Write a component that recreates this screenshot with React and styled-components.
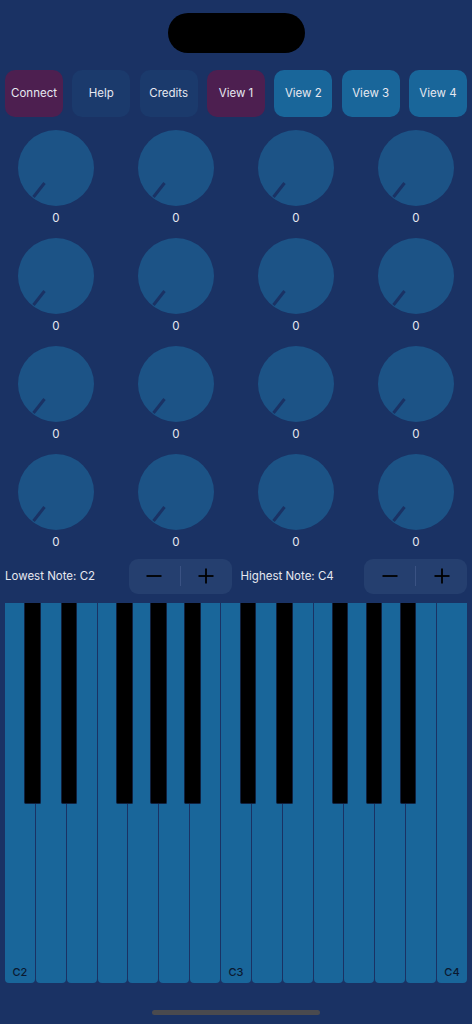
import React from 'react';
import styled, { createGlobalStyle } from 'styled-components';

const GlobalStyle = createGlobalStyle`
  html, body {
    margin: 0;
    padding: 0;
    background: #1a3264;
  }
  * { box-sizing: border-box; }
`;

const Page = styled.div`
  width: 472px;
  height: 1024px;
  background: #1a3264;
  font-family: Inter, "Liberation Sans", sans-serif;
  color: #e6e8f0;
  display: flex;
  flex-direction: column;
  align-items: stretch;
  overflow: hidden;
`;

const Island = styled.div`
  align-self: center;
  width: 137px;
  height: 40px;
  margin-top: 13px;
  border-radius: 20px;
  background: #000;
`;

const Toolbar = styled.div`
  display: flex;
  gap: 9.3px;
  padding: 0 5px;
  margin-top: 17px;
`;

const tones = {
  purple: '#4d1f50',
  navy: '#1b3a6c',
  blue: '#19669a',
};

const ToolButton = styled.button`
  flex: 1;
  height: 47px;
  border: 0;
  border-radius: 10px;
  background: ${(p) => tones[p.$tone]};
  color: #e6e8f0;
  font-family: inherit;
  font-size: 11.5px;
  padding: 0 0 1px;
`;

const KnobGrid = styled.div`
  display: grid;
  grid-template-columns: repeat(4, 100px);
  column-gap: 20px;
  row-gap: 12px;
  padding-left: 6px;
  margin-top: 13px;
`;

const KnobCell = styled.div`
  display: flex;
  flex-direction: column;
  align-items: center;
  gap: 5px;
`;

const KnobValue = styled.span`
  font-size: 11.5px;
  line-height: 15px;
  color: #e6e8f0;
`;

const NoteRow = styled.div`
  display: flex;
  gap: 9px;
  padding: 0 5px;
  margin-top: 8.5px;
`;

const NoteGroup = styled.div`
  flex: 1;
  display: flex;
  align-items: center;
  justify-content: space-between;
`;

const NoteLabel = styled.span`
  font-size: 11.5px;
  color: #e6e8f0;
`;

const Stepper = styled.div`
  width: 103px;
  height: 35px;
  border-radius: 9px;
  background: #253f6f;
  display: flex;
  align-items: center;
`;

const StepButton = styled.div`
  flex: 1;
  height: 100%;
  display: flex;
  align-items: center;
  justify-content: center;
`;

const StepDivider = styled.div`
  width: 1px;
  height: 20px;
  background: #3a5283;
`;

const Keyboard = styled.div`
  position: relative;
  height: 380px;
  margin: 9px 5px 0;
  display: flex;
  gap: 1px;
`;

const WhiteKey = styled.div`
  flex: 1;
  background: #19669a;
  border-radius: 0 0 4px 4px;
  display: flex;
  align-items: flex-end;
  justify-content: center;
  padding-bottom: 4px;
  font-size: 11px;
  font-weight: 500;
  color: #0b1930;
`;

const BlackKey = styled.div`
  position: absolute;
  top: 0;
  height: 201px;
  background: #000;
  border: 1px solid #10213f;
  border-top: 0;
  border-radius: 0 0 2px 2px;
`;

const HomeBar = styled.div`
  align-self: center;
  width: 168px;
  height: 5px;
  border-radius: 3px;
  background: #4a4a4e;
  margin-top: 27px;
`;

const Knob = () => (
  <svg width="76" height="76" viewBox="0 0 76 76">
    <circle cx="38" cy="38" r="38" fill="#1c5386" />
    <line x1="26.5" y1="53" x2="15.5" y2="67" stroke="#1a3264" strokeWidth="3" strokeLinecap="butt" />
  </svg>
);

const Minus = () => (
  <svg width="16" height="16" viewBox="0 0 16 16">
    <line x1="0.5" y1="8" x2="15.5" y2="8" stroke="#000" strokeWidth="1.8" />
  </svg>
);

const Plus = () => (
  <svg width="16" height="16" viewBox="0 0 16 16">
    <line x1="0.5" y1="8" x2="15.5" y2="8" stroke="#000" strokeWidth="1.8" />
    <line x1="8" y1="0.5" x2="8" y2="15.5" stroke="#000" strokeWidth="1.8" />
  </svg>
);

const buttons = [
  ['Connect', 'purple'],
  ['Help', 'navy'],
  ['Credits', 'navy'],
  ['View 1', 'purple'],
  ['View 2', 'blue'],
  ['View 3', 'blue'],
  ['View 4', 'blue'],
];

const WHITE_COUNT = 15;
const KEY_W = 462 / WHITE_COUNT;
const blackOffsets = [0.617, 1.808, 3.604, 4.708, 5.812];
const blackKeys = [0, 1].flatMap((oct) =>
  blackOffsets.map((o) => (oct * 7 + o) * KEY_W)
);

const NoteControl = ({ label }) => (
  <NoteGroup>
    <NoteLabel>{label}</NoteLabel>
    <Stepper>
      <StepButton><Minus /></StepButton>
      <StepDivider />
      <StepButton><Plus /></StepButton>
    </Stepper>
  </NoteGroup>
);

export default function App() {
  return (
    <>
      <GlobalStyle />
      <Page>
        <Island />
        <Toolbar>
          {buttons.map(([label, tone]) => (
            <ToolButton key={label} $tone={tone}>{label}</ToolButton>
          ))}
        </Toolbar>
        <KnobGrid>
          {Array.from({ length: 16 }, (_, i) => (
            <KnobCell key={i}>
              <Knob />
              <KnobValue>0</KnobValue>
            </KnobCell>
          ))}
        </KnobGrid>
        <NoteRow>
          <NoteControl label="Lowest Note: C2" />
          <NoteControl label="Highest Note: C4" />
        </NoteRow>
        <Keyboard>
          {Array.from({ length: WHITE_COUNT }, (_, i) => (
            <WhiteKey key={i}>
              {i === 0 ? 'C2' : i === 7 ? 'C3' : i === 14 ? 'C4' : ''}
            </WhiteKey>
          ))}
          {blackKeys.map((left, i) => (
            <BlackKey key={i} style={{ left: `${left}px`, width: `${0.542 * KEY_W}px` }} />
          ))}
        </Keyboard>
        <HomeBar />
      </Page>
    </>
  );
}
